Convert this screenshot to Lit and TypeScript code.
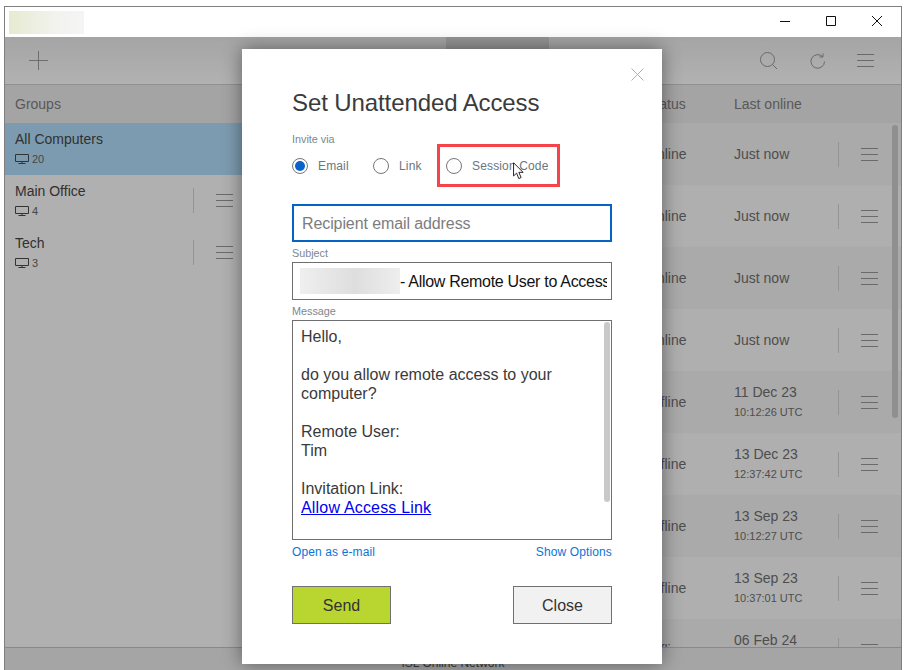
import { LitElement, html, css } from "lit";
import { customElement } from "lit/decorators.js";

const burger = html`<svg class="burger" width="17" height="13" viewBox="0 0 17 13"><path d="M0 .5H17M0 6.5H17M0 12.5H17" stroke="#989898" fill="none"/></svg>`;
const monitor = html`<svg class="mon" width="14" height="10" viewBox="0 0 14 10"><path d="M.5 .5H13.5V7.5H.5Z M7 8V9.5 M3.5 9.5H10.5" stroke="#4a4a4a" fill="none"/></svg>`;

const rows: [string, string, string?][] = [
  ["Online", "Just now"],
  ["Online", "Just now"],
  ["Online", "Just now"],
  ["Online", "Just now"],
  ["Offline", "11 Dec 23", "10:12:26 UTC"],
  ["Offline", "13 Dec 23", "12:37:42 UTC"],
  ["Offline", "13 Sep 23", "10:12:27 UTC"],
  ["Offline", "13 Sep 23", "10:37:01 UTC"],
  ["Offline", "06 Feb 24", "10:00:00 UTC"],
];

const groups: [string, string, boolean][] = [
  ["All Computers", "20", true],
  ["Main Office", "4", false],
  ["Tech", "3", false],
];

@customElement("app-root")
export class AppRoot extends LitElement {
  static styles = css`
    :host {
      display: block;
      width: 906px;
      height: 670px;
      overflow: hidden;
      background: #fff;
      font-family: "Liberation Sans", Arial, sans-serif;
    }
    .window {
      box-sizing: border-box;
      height: 664px;
      margin: 6px 4px 0 4px;
      border: 1px solid #7f7f7f;
      border-bottom: none;
      display: flex;
      flex-direction: column;
      background: #fff;
      position: relative;
      overflow: hidden;
    }
    .title {
      height: 30px;
      flex: none;
      display: flex;
      align-items: center;
      justify-content: space-between;
    }
    .logo {
      width: 75px;
      height: 23px;
      margin-left: 4px;
      margin-top: 1px;
      background: linear-gradient(90deg, #e6ebd0 0, #ebeedd 25%, #f2f3ef 65%, #f5f5f5 100%);
      filter: blur(0.6px);
    }
    .winbtns {
      display: flex;
      align-items: center;
      gap: 34px;
      margin-right: 18px;
      margin-top: -2px;
    }
    .winbtns svg, .mon, .burger { display: block; }
    .toolbar {
      height: 48px;
      box-sizing: border-box;
      flex: none;
      background: linear-gradient(#ececec, #fff);
      border-bottom: 1px solid #cecece;
      display: flex;
      align-items: center;
      padding: 0 27px 0 24px;
      position: relative;
    }
    .tabmark {
      position: absolute;
      left: 441px;
      top: 0;
      width: 103px;
      height: 12px;
      background: #d6d6d6;
    }
    .tools {
      margin-left: auto;
      display: flex;
      align-items: center;
      gap: 32px;
    }
    .body {
      flex: 1;
      display: flex;
      min-height: 0;
      overflow: hidden;
    }
    .side {
      width: 246px;
      flex: none;
      background: #fcfcfc;
    }
    .head {
      height: 38px;
      background: #ebebeb;
      display: flex;
      align-items: center;
      color: #808080;
      font-size: 14px;
    }
    .side .head { padding-left: 10px; }
    .group {
      height: 52px;
      box-sizing: border-box;
      padding: 8px 18px 0 10px;
      display: flex;
      justify-content: space-between;
      align-items: flex-start;
      color: #474747;
      font-size: 14px;
      line-height: 16px;
    }
    .group.sel { background: #b3dffc; }
    .count {
      display: flex;
      align-items: center;
      gap: 3px;
      font-size: 11px;
      color: #666;
      margin-top: 6px;
      line-height: 12px;
    }
    .sep {
      width: 1px;
      height: 25px;
      background: #d5d5d5;
      flex: none;
    }
    .actions {
      margin-top: 5px;
      display: flex;
      align-items: center;
      gap: 22px;
    }
    .main {
      flex: 1;
      min-width: 0;
      position: relative;
      background: #fcfcfc;
    }
    .main .head { padding-left: 395px; }
    .hstatus { width: 88px; flex: none; }
    .list { position: relative; }
    .row {
      height: 62px;
      display: flex;
      align-items: center;
      color: #707070;
      font-size: 14px;
    }
    .row:nth-child(odd) { background: #f4f4f4; }
    .row:nth-child(even) { background: #fbfbfb; }
    .status {
      margin-left: 395px;
      width: 88px;
      flex: none;
      white-space: nowrap;
    }
    .when { width: 104px; flex: none; line-height: 20px; }
    .when small { display: block; font-size: 11px; }
    .row .sep { margin-right: 22px; }
    .scroll {
      position: absolute;
      right: 3px;
      top: 2px;
      width: 6px;
      height: 293px;
      border-radius: 3px;
      background: #cdcdcd;
    }
    .foot {
      flex: none;
      height: 23px;
      box-sizing: border-box;
      background: #ededed;
      border-top: 1px solid #c5c5c5;
      text-align: center;
      font-size: 12px;
      color: #555;
      line-height: 31px;
      overflow: hidden;
    }
    .overlay {
      position: absolute;
      left: 0;
      right: 0;
      top: 30px;
      bottom: 0;
      background: rgba(0, 0, 0, 0.3);
    }
    .dialog {
      position: absolute;
      left: 237px;
      top: 42px;
      width: 420px;
      height: 615px;
      box-sizing: border-box;
      background: #fff;
      box-shadow: 0 0 18px rgba(0, 0, 0, 0.45);
      padding: 40px 50px 0;
      display: flex;
      flex-direction: column;
    }
    .x {
      position: absolute;
      left: 389px;
      top: 19px;
      display: block;
    }
    h1 {
      margin: 0;
      font-weight: 400;
      font-size: 24px;
      line-height: 28px;
      color: #3b3b3b;
      letter-spacing: -0.1px;
    }
    .lbl {
      font-size: 10.8px;
      line-height: 12px;
      color: #7d8790;
    }
    .via { margin-top: 16px; }
    .radios {
      display: flex;
      align-items: center;
      margin-top: 11px;
      height: 20px;
      font-size: 12px;
      letter-spacing: 0.15px;
      color: #6a7680;
    }
    .radio {
      display: flex;
      align-items: center;
      gap: 10px;
    }
    .dot {
      box-sizing: border-box;
      width: 16px;
      height: 16px;
      border-radius: 50%;
      border: 1px solid #767676;
      background: #fff;
      flex: none;
    }
    .dot.on { position: relative; }
    .dot.on::after {
      content: "";
      position: absolute;
      inset: 2px;
      border-radius: 50%;
      background: #0a63cc;
    }
    .r1 { width: 81px; }
    .r2 { width: 73px; }
    .session { position: relative; }
    .redbox {
      position: absolute;
      left: -9px;
      top: -14px;
      width: 123px;
      height: 43px;
      box-sizing: border-box;
      border: 3px solid #f4444a;
    }
    .cursor {
      position: absolute;
      left: 66px;
      top: 4px;
      display: block;
    }
    .email {
      box-sizing: border-box;
      margin-top: 28px;
      height: 38px;
      flex: none;
      border: 2px solid #0563c1;
      padding: 1px 8px 0;
      display: flex;
      align-items: center;
      font-size: 16px;
      letter-spacing: -0.1px;
      color: #7d7d7d;
    }
    .sub-l { margin-top: 5px; }
    .subject {
      box-sizing: border-box;
      margin-top: 3px;
      height: 38px;
      flex: none;
      border: 1px solid #6f6f6f;
      display: flex;
      align-items: center;
      padding: 0 4px 0 7px;
      font-size: 16px;
      color: #111;
      white-space: nowrap;
      overflow: hidden;
      letter-spacing: -0.3px;
    }
    .blur {
      flex: none;
      width: 100px;
      height: 26px;
      background: linear-gradient(90deg, #efefef, #dedede 55%, #eeeeee);
    }
    .clip { overflow: hidden; flex: 1; padding-top: 2px; }
    .msg-l { margin-top: 5px; }
    .message {
      box-sizing: border-box;
      margin-top: 3px;
      height: 220px;
      flex: none;
      border: 1px solid #6f6f6f;
      padding: 6px 16px 0 8px;
      font-size: 16px;
      line-height: 19px;
      color: #3a3a3a;
      position: relative;
    }
    .message p { margin: 0 0 19px; }
    .message a { color: #0000ee; text-decoration: underline; letter-spacing: 0.18px; }
    .mscroll {
      position: absolute;
      right: 1px;
      top: 1px;
      width: 6px;
      height: 180px;
      border-radius: 3px;
      background: #c9c9c9;
    }
    .links {
      display: flex;
      justify-content: space-between;
      margin-top: 5px;
      font-size: 12px;
      line-height: 14px;
      letter-spacing: 0.12px;
      color: #0a74da;
    }
    .btns {
      display: flex;
      justify-content: space-between;
      margin-top: 27px;
    }
    .btn {
      box-sizing: border-box;
      width: 99px;
      height: 38px;
      border: 1px solid #707070;
      padding-top: 1px;
      display: flex;
      align-items: center;
      justify-content: center;
      font-size: 16px;
      color: #333;
    }
    .send { background: #b9d52f; }
    .close { background: #f1f1f1; }
  `;

  render() {
    return html`
      <div class="window">
        <div class="title">
          <div class="logo"></div>
          <div class="winbtns">
            <svg width="12" height="12" viewBox="0 0 12 12"><path d="M1 6.5H11" stroke="#111" fill="none"/></svg>
            <svg width="12" height="12" viewBox="0 0 12 12"><path d="M1.5 1.5H10.5V10.5H1.5Z" stroke="#111" fill="none"/></svg>
            <svg width="12" height="12" viewBox="0 0 12 12"><path d="M1 1L11 11M11 1L1 11" stroke="#111" fill="none"/></svg>
          </div>
        </div>
        <div class="toolbar">
          <div class="tabmark"></div>
          <svg width="19" height="19" viewBox="0 0 19 19"><path d="M9.5 0V19M0 9.5H19" stroke="#9c9c9c" fill="none"/></svg>
          <div class="tools">
            <svg width="18" height="17" viewBox="0 0 18 17"><circle cx="7.5" cy="7.5" r="7" stroke="#989898" fill="none"/><path d="M12.5 12.5L17 17" stroke="#989898" fill="none"/></svg>
            <svg width="15" height="16" viewBox="0 0 15 16"><path d="M12.5 3.6A6.8 6.8 0 1 0 14.5 8.5" stroke="#989898" fill="none"/><path d="M9.5 4H13V.4" stroke="#989898" fill="none"/></svg>
            <svg width="17" height="13" viewBox="0 0 17 13"><path d="M0 .5H17M0 6.5H17M0 12.5H17" stroke="#989898" fill="none"/></svg>
          </div>
        </div>
        <div class="body">
          <div class="side">
            <div class="head">Groups</div>
            ${groups.map(
              ([name, n, sel]) => html`
                <div class="group ${sel ? "sel" : ""}">
                  <div>
                    <div>${name}</div>
                    <div class="count">${monitor}<span>${n}</span></div>
                  </div>
                  ${sel ? "" : html`<div class="actions"><div class="sep"></div>${burger}</div>`}
                </div>
              `
            )}
          </div>
          <div class="main">
            <div class="head"><span class="hstatus">Status</span><span>Last online</span></div>
            <div class="list">
              ${rows.map(
                ([s, w, t]) => html`
                  <div class="row">
                    <div class="status">${s}</div>
                    <div class="when">${w}${t ? html`<small>${t}</small>` : ""}</div>
                    <div class="sep"></div>
                    ${burger}
                  </div>
                `
              )}
              <div class="scroll"></div>
            </div>
          </div>
        </div>
        <div class="foot">ISL Online Network</div>
        <div class="overlay"></div>
        <div class="dialog">
          <svg class="x" width="13" height="13" viewBox="0 0 13 13"><path d="M.5 .5L12.5 12.5M12.5 .5L.5 12.5" stroke="#b0b0b0" fill="none"/></svg>
          <h1>Set Unattended Access</h1>
          <div class="lbl via">Invite via</div>
          <div class="radios">
            <div class="radio r1"><div class="dot on"></div>Email</div>
            <div class="radio r2"><div class="dot"></div>Link</div>
            <div class="radio session">
              <div class="redbox"></div>
              <div class="dot"></div>Session Code
              <svg class="cursor" width="13" height="18" viewBox="0 0 13 20"><path d="M1 .8V15.5L4.4 12.4L6.8 18.4L9.4 17.3L6.9 11.5H11.6Z" fill="#fff" stroke="#111" stroke-width="1"/></svg>
            </div>
          </div>
          <div class="email">Recipient email address</div>
          <div class="lbl sub-l">Subject</div>
          <div class="subject">
            <div class="blur"></div>
            <div class="clip">- Allow Remote User to Access</div>
          </div>
          <div class="lbl msg-l">Message</div>
          <div class="message">
            <p>Hello,</p>
            <p>do you allow remote access to your computer?</p>
            <p>Remote User:<br />Tim</p>
            <p>Invitation Link:<br /><a>Allow Access Link</a></p>
            <div class="mscroll"></div>
          </div>
          <div class="links"><span>Open as e-mail</span><span>Show Options</span></div>
          <div class="btns">
            <div class="btn send">Send</div>
            <div class="btn close">Close</div>
          </div>
        </div>
      </div>
    `;
  }
}
